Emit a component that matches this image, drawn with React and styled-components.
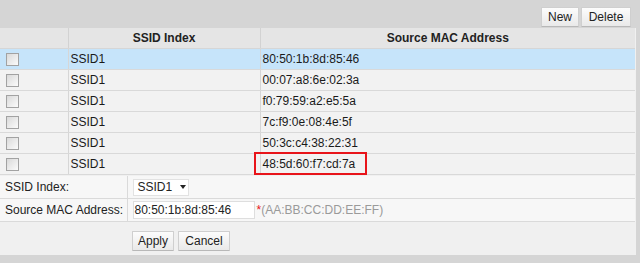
import React from "react";
import styled, { createGlobalStyle } from "styled-components";

const Global = createGlobalStyle`
  body {
    margin: 0;
    background: #d5d5d5;
    font-family: "Liberation Sans", Arial, sans-serif;
    font-size: 12px;
    color: #1a1a1a;
  }
`;

const Page = styled.div`
  width: 640px;
  height: 263px;
  background: #d5d5d5;
`;

const Toolbar = styled.div`
  height: 28px;
  display: flex;
  justify-content: flex-end;
  align-items: flex-start;
  gap: 2px;
  padding: 7px 9px 0 0;
  box-sizing: border-box;
`;

const Button = styled.button`
  width: ${(p) => p.$w}px;
  height: 20px;
  padding: 0;
  font-family: "Liberation Sans", Arial, sans-serif;
  font-size: 12px;
  color: #222;
  background: linear-gradient(#fcfcfc, #e9e9e9);
  border: 1px solid #cfcfcf;
  border-bottom-color: #b8b8b8;
  border-radius: 1px;
  cursor: pointer;
`;

const Panel = styled.div`
  width: 636px;
  background: #f0f0f0;
  padding-bottom: 2px;
`;

const Grid = styled.table`
  width: 635px;
  border-collapse: collapse;
  table-layout: fixed;
`;

const Head = styled.th`
  height: 20px;
  padding: 0;
  background: #e5e5e5;
  font-weight: bold;
  font-size: 12px;
  color: #222;
  text-align: center;
  border-right: 1px solid #d2d2d2;
  border-bottom: 1px solid #d6d6d6;
  &:last-child {
    border-right: none;
  }
`;

const Row = styled.tr`
  background: ${(p) => (p.$active ? "#c6e4fa" : "#f2f2f2")};
`;

const Cell = styled.td`
  height: 20px;
  padding: 0 0 0 ${(p) => p.$pad || 2}px;
  border-right: 1px solid #d6d6d6;
  border-bottom: 1px solid #d9d9d9;
  color: #1a1a1a;
  &:last-child {
    border-right: none;
  }
`;

const Mac = styled.span`
  display: inline-block;
  position: relative;
`;

const Mark = styled.span`
  position: absolute;
  left: -9px;
  top: -5px;
  width: 109px;
  height: 19px;
  border: 2px solid #e8141a;
`;

const Box = styled.span`
  display: block;
  width: 11px;
  height: 11px;
  border: 1px solid #a2a2a2;
  background: linear-gradient(135deg, #d9d9d9, #fbfbfb);
  margin-top: 1px;
`;

const Form = styled.table`
  width: 635px;
  border-collapse: collapse;
  table-layout: fixed;
  margin-top: 1px;
`;

const FormRow = styled.tr`
  background: #f7f7f7;
`;

const Label = styled.td`
  height: 22px;
  padding: 0 0 0 5px;
  border-right: 1px solid #dadada;
  border-bottom: 1px solid #dadada;
  color: #222;
`;

const Field = styled.td`
  padding: 0 0 0 5px;
  border-bottom: 1px solid #dadada;
`;

const Select = styled.span`
  display: inline-flex;
  align-items: center;
  height: 17px;
  width: 56px;
  box-sizing: border-box;
  padding-left: 4px;
  background: #fff;
  border: 1px solid #e2e2e2;
  color: #222;
  vertical-align: middle;
  &::after {
    content: "";
    margin-left: 8px;
    border-left: 3.5px solid transparent;
    border-right: 3.5px solid transparent;
    border-top: 4px solid #222;
  }
`;

const Input = styled.span`
  display: inline-flex;
  align-items: center;
  height: 18px;
  width: 122px;
  box-sizing: border-box;
  padding-left: 1px;
  background: #fff;
  border: 1px solid #dedede;
  color: #222;
  vertical-align: middle;
`;

const Hint = styled.span`
  margin-left: 2px;
  color: #9a9a9a;
  vertical-align: middle;
`;

const Star = styled.span`
  color: #e8141a;
`;

const Actions = styled.div`
  display: flex;
  gap: 4px;
  padding: 9px 0 0 132px;
  height: 31px;
  box-sizing: border-box;
`;

const rows = [
  "80:50:1b:8d:85:46",
  "00:07:a8:6e:02:3a",
  "f0:79:59:a2:e5:5a",
  "7c:f9:0e:08:4e:5f",
  "50:3c:c4:38:22:31",
  "48:5d:60:f7:cd:7a",
];

export default function App() {
  return (
    <Page>
      <Global />
      <Toolbar>
        <Button $w={38}>New</Button>
        <Button $w={50}>Delete</Button>
      </Toolbar>
      <Panel>
        <Grid>
          <colgroup>
            <col style={{ width: 68 }} />
            <col style={{ width: 192 }} />
            <col />
          </colgroup>
          <thead>
            <tr>
              <Head />
              <Head>SSID Index</Head>
              <Head>Source MAC Address</Head>
            </tr>
          </thead>
          <tbody>
            {rows.map((mac, i) => (
              <Row key={mac} $active={i === 0}>
                <Cell $pad={6}>
                  <Box />
                </Cell>
                <Cell>SSID1</Cell>
                <Cell>
                  <Mac>
                    {mac}
                    {i === rows.length - 1 && <Mark />}
                  </Mac>
                </Cell>
              </Row>
            ))}
          </tbody>
        </Grid>
        <Form>
          <colgroup>
            <col style={{ width: 127 }} />
            <col />
          </colgroup>
          <tbody>
            <FormRow>
              <Label>SSID Index:</Label>
              <Field>
                <Select>SSID1</Select>
              </Field>
            </FormRow>
            <FormRow>
              <Label>Source MAC Address:</Label>
              <Field>
                <Input>80:50:1b:8d:85:46</Input>
                <Hint>
                  <Star>*</Star>(AA:BB:CC:DD:EE:FF)
                </Hint>
              </Field>
            </FormRow>
          </tbody>
        </Form>
        <Actions>
          <Button $w={42}>Apply</Button>
          <Button $w={52}>Cancel</Button>
        </Actions>
      </Panel>
    </Page>
  );
}
